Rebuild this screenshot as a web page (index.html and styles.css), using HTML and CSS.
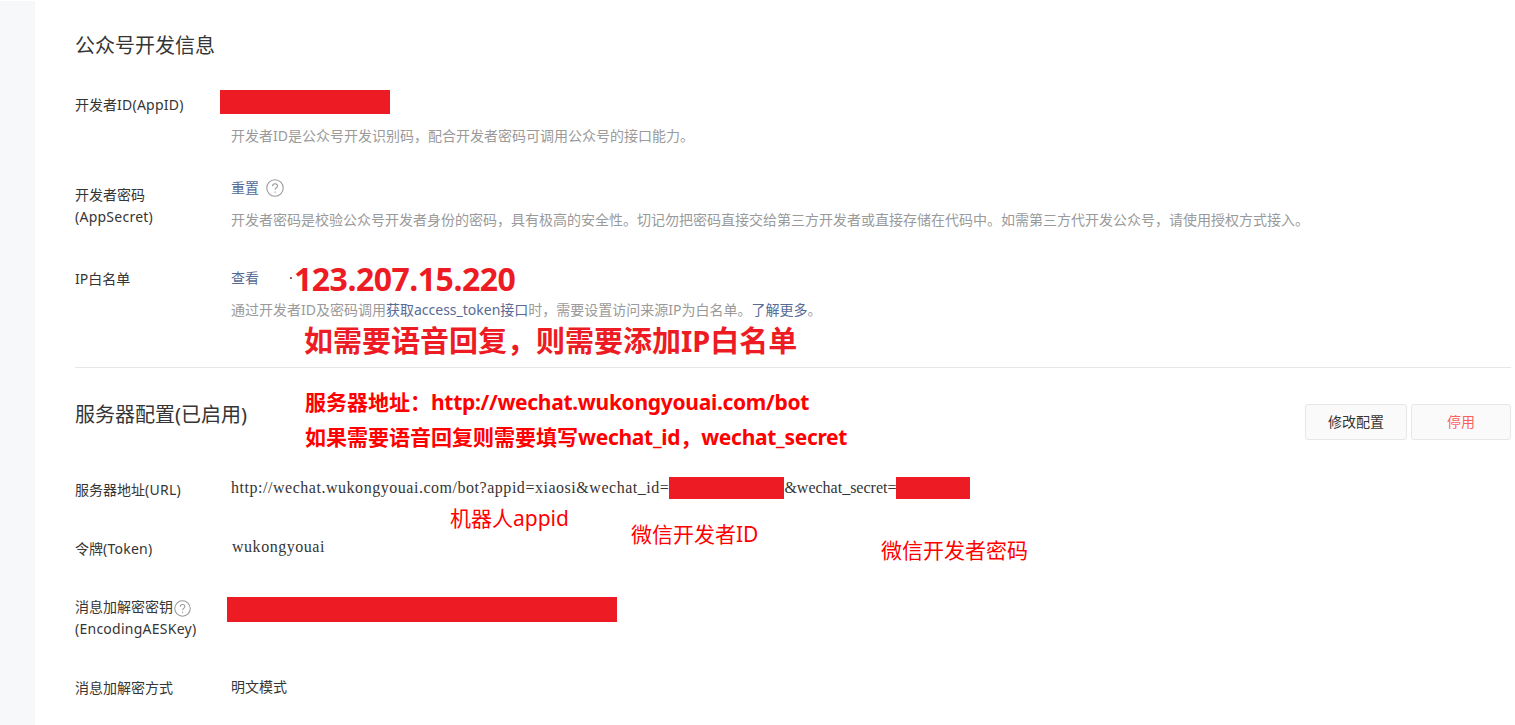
FILE: index.html
```html
<!DOCTYPE html>
<html lang="zh-CN">
<head>
    <meta charset="UTF-8">
    <title>公众号开发信息</title>
    <link rel="stylesheet" href="styles.css">
</head>
<body>
<div class="page">
    <div class="sidebar"></div>
    <div class="main">
        <h2 class="title">公众号开发信息</h2>

        <div class="row row--appid">
            <div class="row__label">开发者<span class="latin">ID(AppID)</span></div>
            <div class="row__value">
                <div class="mask mask--appid"></div>
                <p class="desc desc--appid">开发者ID是公众号开发识别码，配合开发者密码可调用公众号的接口能力。</p>
            </div>
        </div>

        <div class="row row--secret">
            <div class="row__label">开发者密码<br><span class="latin">(AppSecret)</span></div>
            <div class="row__value">
                <div class="line"><a class="link">重置</a>
                    <svg class="help help--reset" viewBox="0 0 18 18"><circle cx="9" cy="9" r="8.2"/><path d="M6.6 7.2c0-1.5 1.1-2.4 2.5-2.4s2.4.9 2.4 2.1c0 1.9-2.4 1.9-2.4 3.9M9.1 12.4v1.3"/></svg>
                </div>
                <p class="desc">开发者密码是校验公众号开发者身份的密码，具有极高的安全性。切记勿把密码直接交给第三方开发者或直接存储在代码中。如需第三方代开发公众号，请使用授权方式接入。</p>
            </div>
        </div>

        <div class="row row--ip">
            <div class="row__label">IP白名单</div>
            <div class="row__value">
                <div class="line"><a class="link">查看</a><span class="dot">·</span></div>
                <p class="desc">通过开发者ID及密码调用<a class="link">获取access_token接口</a>时，需要设置访问来源IP为白名单。<a class="link">了解更多</a>。</p>
            </div>
        </div>

        <hr class="divider">

        <div class="section-head">
            <h2 class="title">服务器配置(已启用)</h2>
            <div class="actions">
                <button class="btn btn--edit">修改配置</button>
                <button class="btn btn--stop">停用</button>
            </div>
        </div>

        <div class="row row--url">
            <div class="row__label">服务器地址<span class="latin">(URL)</span></div>
            <div class="row__value serif">http://wechat.wukongyouai.com/bot?appid=xiaosi&amp;wechat_id=<span class="mask mask--wxid"></span><span class="serif__tight">&amp;wechat_secret=</span><span class="mask mask--wxsecret"></span></div>
        </div>

        <div class="row row--token">
            <div class="row__label">令牌<span class="latin">(Token)</span></div>
            <div class="row__value serif serif--token">wukongyouai</div>
        </div>

        <div class="row row--key">
            <div class="row__label">消息加解密密钥<svg class="help" viewBox="0 0 18 18"><circle cx="9" cy="9" r="8.2"/><path d="M6.6 7.2c0-1.5 1.1-2.4 2.5-2.4s2.4.9 2.4 2.1c0 1.9-2.4 1.9-2.4 3.9M9.1 12.4v1.3"/></svg><br><span class="latin">(EncodingAESKey)</span></div>
            <div class="row__value">
                <div class="mask mask--key"></div>
            </div>
        </div>

        <div class="row row--mode">
            <div class="row__label">消息加解密方式</div>
            <div class="row__value">明文模式</div>
        </div>
    </div>

    <!-- red notes pasted on top of the screenshot -->
    <div class="note note--ip">123.207.15.220</div>
    <div class="note note--voice">如需要语音回复，则需要添加IP白名单</div>
    <div class="note note--server">服务器地址：<span class="note__latin">http://wechat.wukongyouai.com/bot</span></div>
    <div class="note note--fill">如果需要语音回复则需要填写<span class="note__latin">wechat_id</span>，<span class="note__latin">wechat_secret</span></div>
    <div class="note note--small note--appid">机器人appid</div>
    <div class="note note--small note--wxid">微信开发者ID</div>
    <div class="note note--small note--wxsecret">微信开发者密码</div>
</div>
</body>
</html>
```

FILE: styles.css
```css
html, body {
    margin: 0;
    height: 100%;
    overflow: hidden;
    background-color: #fff;
}

body {
    font-family: "Noto Sans", "Noto Sans CJK SC", sans-serif;
    font-size: 14px;
    line-height: 22px;
    color: #353535;
}

.page {
    position: relative;
    display: flex;
    height: 725px;
}

.sidebar {
    width: 35px;
    margin-top: 1px;
    background-color: #f6f8f9;
}

.main {
    flex: 1;
    padding: 31px 4px 0 40px;
}

.title {
    margin: 0;
    font-size: 20px;
    font-weight: 400;
    line-height: 30px;
}

.row {
    display: flex;
}

.row__label {
    width: 156px;
    flex-shrink: 0;
}

.row__value {
    flex: 1;
}

.latin {
    letter-spacing: 0.25px;
}

.desc {
    margin: 10px 0 0;
    color: #9a9a9a;
    white-space: nowrap;
}

.desc--appid {
    margin-top: 11px;
}

.link {
    color: #576b95;
}

.line {
    display: flex;
    align-items: center;
}

.dot {
    margin-left: 30px;
}

.help {
    width: 17px;
    height: 17px;
    margin-left: 1px;
    fill: none;
    stroke: #999;
    stroke-width: 1.1;
    vertical-align: -5px;
}

.help--reset {
    width: 18px;
    height: 18px;
    margin-left: 7px;
}

/* redacted values */
.mask {
    background-color: #ed1c24;
}

.mask--appid {
    width: 170px;
    height: 24px;
    margin-left: -11px;
}

.mask--wxid,
.mask--wxsecret {
    display: inline-block;
    height: 22px;
    vertical-align: -6px;
}

.mask--wxid {
    width: 115px;
}

.mask--wxsecret {
    width: 74px;
}

.mask--key {
    width: 390px;
    height: 25px;
    margin: 1px 0 0 -4px;
}

/* rows */
.row--appid {
    margin-top: 29px;
}

.row--appid .row__label {
    padding-top: 4px;
}

.row--secret {
    margin-top: 30px;
}

.row--secret .row__label {
    padding-top: 7px;
}

.row--ip {
    margin-top: 36px;
}

.row--ip .row__label {
    padding-top: 1px;
}

.divider {
    height: 1px;
    margin: 46px 0 0;
    border: 0;
    background-color: #e7e7eb;
}

.section-head {
    display: flex;
    justify-content: space-between;
    align-items: flex-start;
    padding-top: 32px;
}

.actions {
    display: flex;
    gap: 4px;
    margin-top: 4px;
}

.btn {
    height: 36px;
    padding: 0;
    border: 1px solid #e7e7eb;
    border-radius: 3px;
    background-color: #fafafa;
    font: inherit;
    color: #353535;
}

.btn--edit {
    width: 102px;
}

.btn--stop {
    width: 100px;
    color: #fa5f5f;
}

.row--url {
    margin-top: 37px;
}

.row--token {
    margin-top: 35px;
}

.row--url .row__label,
.row--token .row__label {
    padding-top: 2px;
}

.row--key {
    margin-top: 36px;
}

.row--mode {
    margin-top: 36px;
}

.row--mode .row__label {
    padding-top: 1px;
}

.serif {
    font-family: "Liberation Serif", "Noto Sans CJK SC", serif;
    font-size: 16px;
    letter-spacing: 0.53px;
    white-space: nowrap;
}

.serif__tight {
    letter-spacing: 0;
}

.serif--token {
    padding-left: 1px;
}

/* annotations */
.note {
    position: absolute;
    font-weight: 700;
    color: #f00;
    white-space: nowrap;
}

.note__latin {
    letter-spacing: -0.3px;
}

.note--ip {
    left: 294px;
    top: 259px;
    font-size: 32px;
    letter-spacing: -0.5px;
    line-height: 40px;
    color: #ed1c24;
}

.note--voice {
    left: 304px;
    top: 321px;
    font-size: 29px;
    line-height: 40px;
    color: #ed1c24;
}

.note--server {
    left: 305px;
    top: 387px;
    font-size: 21px;
    line-height: 30px;
}

.note--fill {
    left: 305px;
    top: 422px;
    font-size: 21px;
    line-height: 30px;
}

.note--small {
    font-size: 21px;
    line-height: 30px;
    font-weight: 400;
}

.note--appid {
    left: 450px;
    top: 503px;
}

.note--wxid {
    left: 631px;
    top: 519px;
}

.note--wxsecret {
    left: 881px;
    top: 535px;
}
```
